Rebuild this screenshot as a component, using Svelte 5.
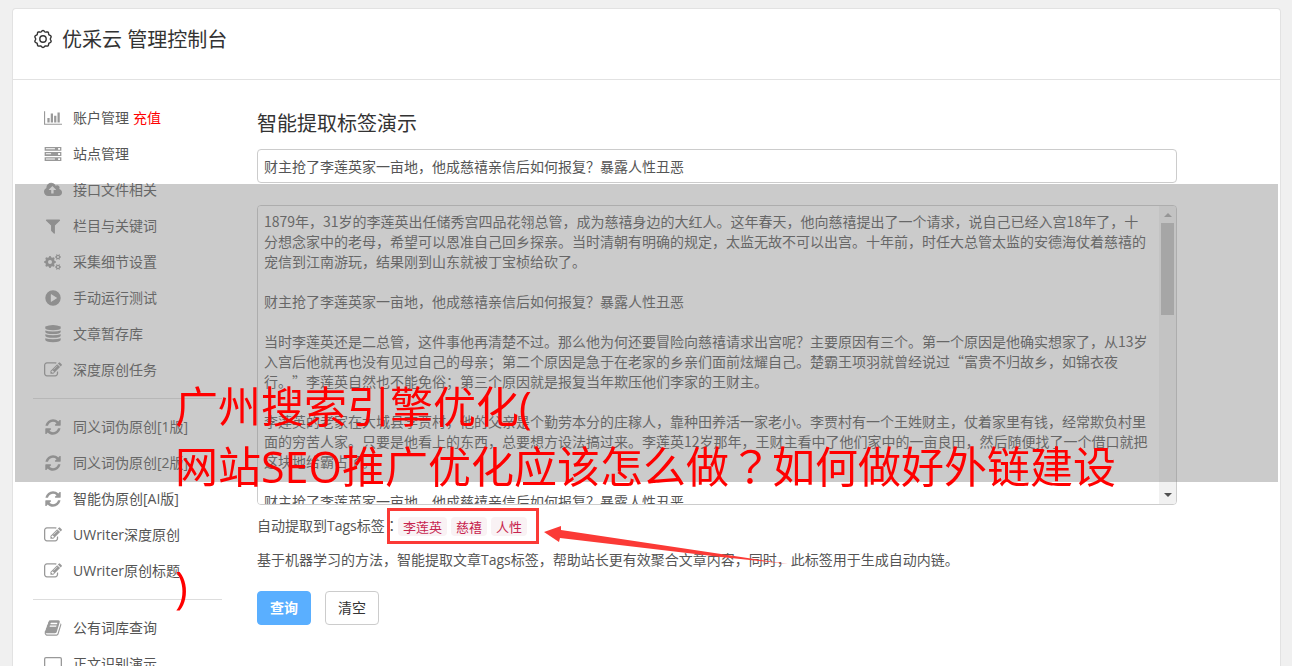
<script>
    const icons = {
        chart: {
            box: "0 0 2048 1792",
            d: "M640 896v512h-256v-512h256zm384-512v1024h-256v-1024h256zm1024 1152v128h-2048v-1536h128v1408h1920zm-640-896v768h-256v-768h256zm384-384v1152h-256v-1152h256z",
        },
        server: {
            box: "0 0 1792 1792",
            d: "M64 192h1664v384h-1664zM192 320v96h896v-96zM1408 288v192h192v-192zM64 704h1664v384h-1664zM192 832v96h512v-96zM1408 800v192h192v-192zM64 1216h1664v384h-1664zM192 1344v96h896v-96zM1408 1312v192h192v-192z",
        },
        upload: {
            box: "0 0 1920 1792",
            d: "M1280 864q0-14-9-23l-352-352q-9-9-23-9t-23 9l-351 351q-10 12-10 24 0 14 9 23t23 9h224v352q0 13 9.5 22.5t22.5 9.5h192q13 0 22.5-9.5t9.5-22.5v-352h224q13 0 22.5-9.5t9.5-22.5zm640 288q0 159-112.5 271.5t-271.5 112.5h-1088q-185 0-316.5-131.5t-131.5-316.5q0-130 70-240t188-165q-2-30-2-43 0-212 150-362t362-150q156 0 285.5 87t188.5 231q71-62 166-62 106 0 181 75t75 181q0 76-41 138 130 31 213.5 135.5t83.5 238.5z",
        },
        filter: {
            box: "0 0 1792 1792",
            d: "M1595 295q17 41-14 70l-493 493v742q0 42-39 59-13 5-25 5-27 0-45-19l-256-256q-19-19-19-45v-486l-493-493q-31-29-14-70 17-39 59-39h1280q42 0 59 39z",
        },
        cogs: {
            box: "0 0 18 16",
            d: gear(6, 8, 5, 6, 8, 2) + gear(14, 3, 2.4, 3, 6, 1) + gear(14, 13, 2.4, 3, 6, 1),
        },
        play: {
            box: "0 0 1792 1792",
            d: "M896 128a768 768 0 1 0 0 1536a768 768 0 1 0 0-1536zM704 512q16-8 32 0l544 352q32 32 0 64l-544 352q-16 8-32 0-24-12-24-32v-704q0-20 24-32z",
        },
        database: {
            box: "0 0 1792 1792",
            d: "M896 0q420 0 768 160v190q-100 162-768 162t-768-162v-190q348-160 768-160zM128 540q250 100 768 100t768-100v120q0 236-768 236t-768-236zM128 924q250 100 768 100t768-100v120q0 236-768 236t-768-236zM128 1308q250 100 768 100t768-100v170q0 236-768 236t-768-236z",
        },
        edit: {
            box: "0 0 1792 1792",
            d: "M888 1184l116-116-152-152-116 116v56h96v96h56zm440-720q-16-16-33 1l-350 350q-17 17-1 33t33-1l350-350q17-17 1-33zm80 594v190q0 119-84.5 203.5t-203.5 84.5h-832q-119 0-203.5-84.5t-84.5-203.5v-832q0-119 84.5-203.5t203.5-84.5h832q63 0 117 25 15 7 18 23 3 17-9 29l-49 49q-14 14-32 8-23-6-45-6h-832q-66 0-113 47t-47 113v832q0 66 47 113t113 47h832q66 0 113-47t47-113v-126q0-13 9-22l64-64q15-15 35-7t20 29zm-96-738l288 288-672 672h-288v-288zm444 132l-92 92-288-288 92-92q28-28 68-28t68 28l152 152q28 28 28 68t-28 68z",
        },
        refresh: {
            box: "0 0 1792 1792",
            d: "M1639 1056q0 5-1 7-64 268-268 434.5t-478 166.5q-146 0-282.5-55t-243.5-157l-129 129q-19 19-45 19t-45-19-19-45v-448q0-26 19-45t45-19h448q26 0 45 19t19 45-19 45l-137 137q71 66 161 102t187 36q134 0 250-65t186-179q11-17 53-117 8-23 30-23h192q13 0 22.5 9.5t9.5 22.5zm25-800v448q0 26-19 45t-45 19h-448q-26 0-45-19t-19-45 19-45l138-138q-148-137-349-137-134 0-250 65t-186 179q-11 17-53 117-8 23-30 23h-199q-13 0-22.5-9.5t-9.5-22.5v-7q65-268 270-434.5t480-166.5q146 0 284 55.5t245 156.5l130-129q19-19 45-19t45 19 19 45z",
        },
        book: {
            box: "0 0 1792 1792",
            d: "M1703 478q40 57 18 129l-275 906q-19 64-76.5 107.5t-122.5 43.5h-923q-77 0-148.5-53.5t-99.5-131.5q-24-67-2-127 0-4 3-27t4-37q1-8-3-21.5t-3-19.5q2-11 8-21t16.5-23.5 16.5-23.5q23-38 45-91.5t30-91.5q3-10 .5-30t-.5-28q3-11 17-28t17-23q21-36 42-92t25-90q1-9-2.5-32t.5-28q4-13 22-30.5t22-22.5q19-26 42.5-84.5t27.5-96.5q1-8-3-25.5t-2-26.5q2-8 9-18t18-23 17-21q8-12 16.5-30.5t15-35 16-36 19.5-32 26.5-23.5 36-11.5 47.5 5.5l-1 3q38-9 51-9h761q74 0 114 56t18 130l-274 906q-36 119-71.5 153.5t-128.5 34.5h-869q-27 0-38 15-11 16-1 43 24 70 144 70h923q29 0 56-15.5t35-41.5l300-987q7-22 5-57 38 15 59 43zm-1064 2q-4 13 2 22.5t20 9.5h608q13 0 25.5-9.5t16.5-22.5l21-64q4-13-2-22.5t-20-9.5h-608q-13 0-25.5 9.5t-16.5 22.5zm-83 256q-4 13 2 22.5t20 9.5h608q13 0 25.5-9.5t16.5-22.5l21-64q4-13-2-22.5t-20-9.5h-608q-13 0-25.5 9.5t-16.5 22.5z",
        },
        laptop: {
            box: "0 0 18 16",
            d: "M2 1h14q2 0 2 2v9q0 2-2 2h-14q-2 0-2-2v-9q0-2 2-2zM2 2.3q-.7 0-.7 .7v9q0 .7 .7 .7h14q.7 0 .7-.7v-9q0-.7-.7-.7z",
        },
    };

    const groups = [
        [
            { icon: "chart", text: "账户管理", extra: "充值" },
            { icon: "server", text: "站点管理" },
            { icon: "upload", text: "接口文件相关" },
            { icon: "filter", text: "栏目与关键词" },
            { icon: "cogs", text: "采集细节设置" },
            { icon: "play", text: "手动运行测试" },
            { icon: "database", text: "文章暂存库" },
            { icon: "edit", text: "深度原创任务" },
        ],
        [
            { icon: "refresh", text: "同义词伪原创[1版]" },
            { icon: "refresh", text: "同义词伪原创[2版]" },
            { icon: "refresh", text: "智能伪原创[AI版]" },
            { icon: "edit", text: "UWriter深度原创" },
            { icon: "edit", text: "UWriter原创标题" },
        ],
        [
            { icon: "book", text: "公有词库查询" },
            { icon: "laptop", text: "正文识别演示" },
        ],
    ];

    const sample = "财主抢了李莲英家一亩地，他成慈禧亲信后如何报复？暴露人性丑恶";
    const article = [
        "1879年，31岁的李莲英出任储秀宫四品花翎总管，成为慈禧身边的大红人。这年春天，他向慈禧提出了一个请求，说自己已经入宫18年了，十分想念家中的老母，希望可以恩准自己回乡探亲。当时清朝有明确的规定，太监无故不可以出宫。十年前，时任大总管太监的安德海仗着慈禧的宠信到江南游玩，结果刚到山东就被丁宝桢给砍了。",
        sample,
        "当时李莲英还是二总管，这件事他再清楚不过。那么他为何还要冒险向慈禧请求出宫呢？主要原因有三个。第一个原因是他确实想家了，从13岁入宫后他就再也没有见过自己的母亲；第二个原因是急于在老家的乡亲们面前炫耀自己。楚霸王项羽就曾经说过“富贵不归故乡，如锦衣夜行。”李莲英自然也不能免俗；第三个原因就是报复当年欺压他们李家的王财主。",
        "李莲英的老家在大城县李贾村，他的父亲是个勤劳本分的庄稼人，靠种田养活一家老小。李贾村有一个王姓财主，仗着家里有钱，经常欺负村里面的穷苦人家。只要是他看上的东西，总要想方设法搞过来。李莲英12岁那年，王财主看中了他们家中的一亩良田，然后随便找了一个借口就把这块地给霸占了。",
        sample,
    ].join("\n\n");

    let title = sample;
    let content = article;
    let tags = ["李莲英", "慈禧", "人性"];

    function clearForm() {
        title = "";
        content = "";
        tags = [];
    }

    // toothed ring with a round hole, for the cogs icon
    function gear(cx, cy, inner, outer, teeth, hole) {
        const step = Math.PI / teeth / 2;
        let d = "";
        for (let i = 0; i < teeth * 4; i++) {
            const r = i % 4 < 2 ? outer : inner - 0.3;
            const a = (i - 0.5) * step;
            d += `${i ? "L" : "M"}${cx + r * Math.cos(a)} ${cy + r * Math.sin(a)}`;
        }
        return `${d}zM${cx - hole} ${cy}a${hole} ${hole} 0 1 0 ${hole * 2} 0a${hole} ${hole} 0 1 0 ${-hole * 2} 0z`;
    }

    // wavy outline of the header gear
    function wave(c, r, depth, lobes) {
        let d = "";
        for (let i = 0; i < 120; i++) {
            const a = (i * Math.PI) / 60;
            const k = r + depth * Math.cos(lobes * a);
            d += `${i ? "L" : "M"}${c + k * Math.sin(a)} ${c - k * Math.cos(a)}`;
        }
        return d + "z";
    }
</script>

<div class="page">
    <div class="panel">
        <header>
            <svg class="gear" viewBox="0 0 20 20" aria-hidden="true">
                <path d={wave(10, 7.9, 0.6, 10)} />
                <circle cx="10" cy="10" r="3.2" />
            </svg>
            <h1>优采云 管理控制台</h1>
        </header>

        <div class="columns">
            <nav>
                {#each groups as group, i}
                    {#if i > 0}<hr />{/if}
                    <ul>
                        {#each group as item}
                            <li>
                                <svg viewBox={icons[item.icon].box} class="icon" aria-hidden="true">
                                    <path fill-rule="evenodd" d={icons[item.icon].d} />
                                </svg>
                                <a href="#menu">{item.text}</a>
                                {#if item.extra}<a href="#pay" class="pay">{item.extra}</a>{/if}
                            </li>
                        {/each}
                    </ul>
                {/each}
            </nav>

            <main>
                <h2>智能提取标签演示</h2>
                <form on:submit|preventDefault>
                    <input type="text" aria-label="标题" bind:value={title} />
                    <div class="editor">
                        <textarea aria-label="正文" bind:value={content}></textarea>
                        <div class="scroll" aria-hidden="true">
                            <svg viewBox="0 0 17 17" class="up"><path d="M5 11l4-4 4 4z" /></svg>
                            <div class="thumb"></div>
                            <svg viewBox="0 0 17 17" class="down"><path d="M5 6l4 4 4-4z" /></svg>
                        </div>
                    </div>
                    <div class="result">
                        <div class="name">自动提取到Tags标签<span class="mark">：</span></div>
                        <div class="tags">
                            {#each tags as tag}
                                <code>{tag}</code>
                            {/each}
                            <svg class="arrow" viewBox="0 0 244 40" aria-hidden="true">
                                <path d="M0 7L17 1L17 5L177 29L244 39L177 32L16 13L15 17z" />
                            </svg>
                        </div>
                    </div>
                    <p>基于机器学习的方法，智能提取文章Tags标签，帮助站长更有效聚合文章内容，同时，此标签用于生成自动内链。</p>
                    <div class="buttons">
                        <button type="submit" class="query">查询</button>
                        <button type="button" class="clear" on:click={clearForm}>清空</button>
                    </div>
                </form>
            </main>
        </div>
    </div>

    <div class="shade"></div>
    <div class="caption">广州搜索引擎优化(<br />网站SEO推广优化应该怎么做<span class="mark">？</span>如何做好外链建设<br /><br />)</div>
</div>

<style>
    :global(body) {
        background: #f0f0f0;
        font-family: "Open Sans", "Noto Sans CJK SC", sans-serif;
        font-size: 14px;
        line-height: 20px;
        color: #555;
    }
    .page {
        position: relative;
        display: flex;
        min-height: 100vh;
        box-sizing: border-box;
        padding: 8px 11px 0 12px;
        overflow: hidden;
        text-spacing-trim: space-all;
    }
    .panel {
        flex: 1;
        min-width: 0;
        background: #fff;
        border: 1px solid #e2e2e2;
        border-bottom: none;
        border-radius: 4px 4px 0 0;
    }
    header {
        display: flex;
        align-items: center;
        gap: 9px;
        height: 62px;
        padding: 0 20px 8px;
        border-bottom: 1px solid #e2e2e2;
    }
    .gear {
        width: 20px;
        height: 20px;
        margin-bottom: 3px;
        fill: none;
        stroke: #333;
        stroke-width: 1.4;
    }
    h1,
    h2 {
        margin: 0;
        font-size: 20px;
        line-height: 26px;
        font-weight: 400;
        color: #333;
    }
    .columns {
        display: flex;
        gap: 35px;
        padding: 20px 103px 0 20px;
    }
    header {
        box-sizing: border-box;
        height: 71px;
    }
    nav {
        width: 189px;
        flex-shrink: 0;
    }
    ul {
        list-style: none;
        margin: 0;
        padding: 0;
    }
    li {
        display: flex;
        align-items: center;
        height: 36px;
        padding-left: 11px;
    }
    a {
        color: #555;
        text-decoration: none;
        white-space: nowrap;
    }
    .icon {
        width: 18px;
        height: 18px;
        margin-right: 11px;
        fill: #999;
    }
    .pay {
        margin-left: 4px;
        color: #f00;
    }
    hr {
        height: 1px;
        margin: 10px 0;
        border: none;
        background: #ddd;
    }
    main {
        flex: 1;
        min-width: 0;
        padding-top: 11px;
    }
    input {
        display: block;
        width: 100%;
        height: 34px;
        box-sizing: border-box;
        margin: 12px 0 22px;
        padding: 0 6px;
        border: 1px solid #ccc;
        border-radius: 4px;
        font: inherit;
        font-family: "Noto Sans CJK SC", sans-serif;
        color: #555;
    }
    .editor {
        display: flex;
        height: 298px;
        border: 1px solid #ccc;
        border-radius: 4px;
        overflow: hidden;
    }
    textarea {
        flex: 1;
        min-width: 0;
        margin: 0;
        padding: 5px 8px 6px 6px;
        border: none;
        outline: none;
        resize: none;
        scrollbar-width: none;
        text-spacing-trim: space-all;
        font: inherit;
        font-family: "Noto Sans CJK SC", sans-serif;
        color: #555;
    }
    .scroll {
        display: flex;
        flex-direction: column;
        width: 17px;
        background: #f1f1f1;
    }
    .thumb {
        height: 92px;
        margin: 0 2px;
        background: #c1c1c1;
    }
    .up {
        height: 17px;
        fill: #a3a3a3;
    }
    .down {
        height: 17px;
        margin-top: auto;
        fill: #505050;
    }
    .result {
        display: flex;
        align-items: center;
        height: 20px;
        margin-top: 11px;
    }
    .name {
        width: 141px;
        white-space: nowrap;
    }
    /* centred full-width punctuation */
    .mark {
        font-family: "Noto Sans CJK TC", sans-serif;
        line-height: 1;
    }
    .tags {
        position: relative;
        display: flex;
        gap: 4px;
    }
    /* red marker frame round the extracted tags */
    .tags::after {
        content: "";
        position: absolute;
        inset: -9px -12px -8px -11px;
        border: 3px solid #fb3a36;
    }
    code {
        padding: 0 5px;
        border-radius: 4px;
        background: #f9f2f4;
        color: #c7254e;
        font: 13px/19px "Noto Sans CJK SC", sans-serif;
    }
    .arrow {
        position: absolute;
        top: 8px;
        left: 146px;
        width: 244px;
        height: 40px;
        fill: #fb3a36;
        z-index: 1;
    }
    p {
        margin: 14px 0 21px;
    }
    .buttons {
        display: flex;
        gap: 14px;
    }
    button {
        width: 54px;
        height: 34px;
        padding: 0;
        border: 1px solid #ccc;
        border-radius: 4px;
        background: #fff;
        color: #333;
        font: inherit;
        cursor: pointer;
    }
    .query {
        border-color: #5aafff;
        background: #5aafff;
        color: #fff;
        font-weight: bold;
    }
    .shade {
        position: absolute;
        top: 184px;
        left: 15px;
        right: 14px;
        height: 298px;
        background: rgba(128, 128, 128, 0.41);
        pointer-events: none;
    }
    .caption {
        position: absolute;
        top: 377px;
        left: 175px;
        font-size: 43px;
        line-height: 60px;
        white-space: nowrap;
        color: #f00;
        pointer-events: none;
    }
</style>
